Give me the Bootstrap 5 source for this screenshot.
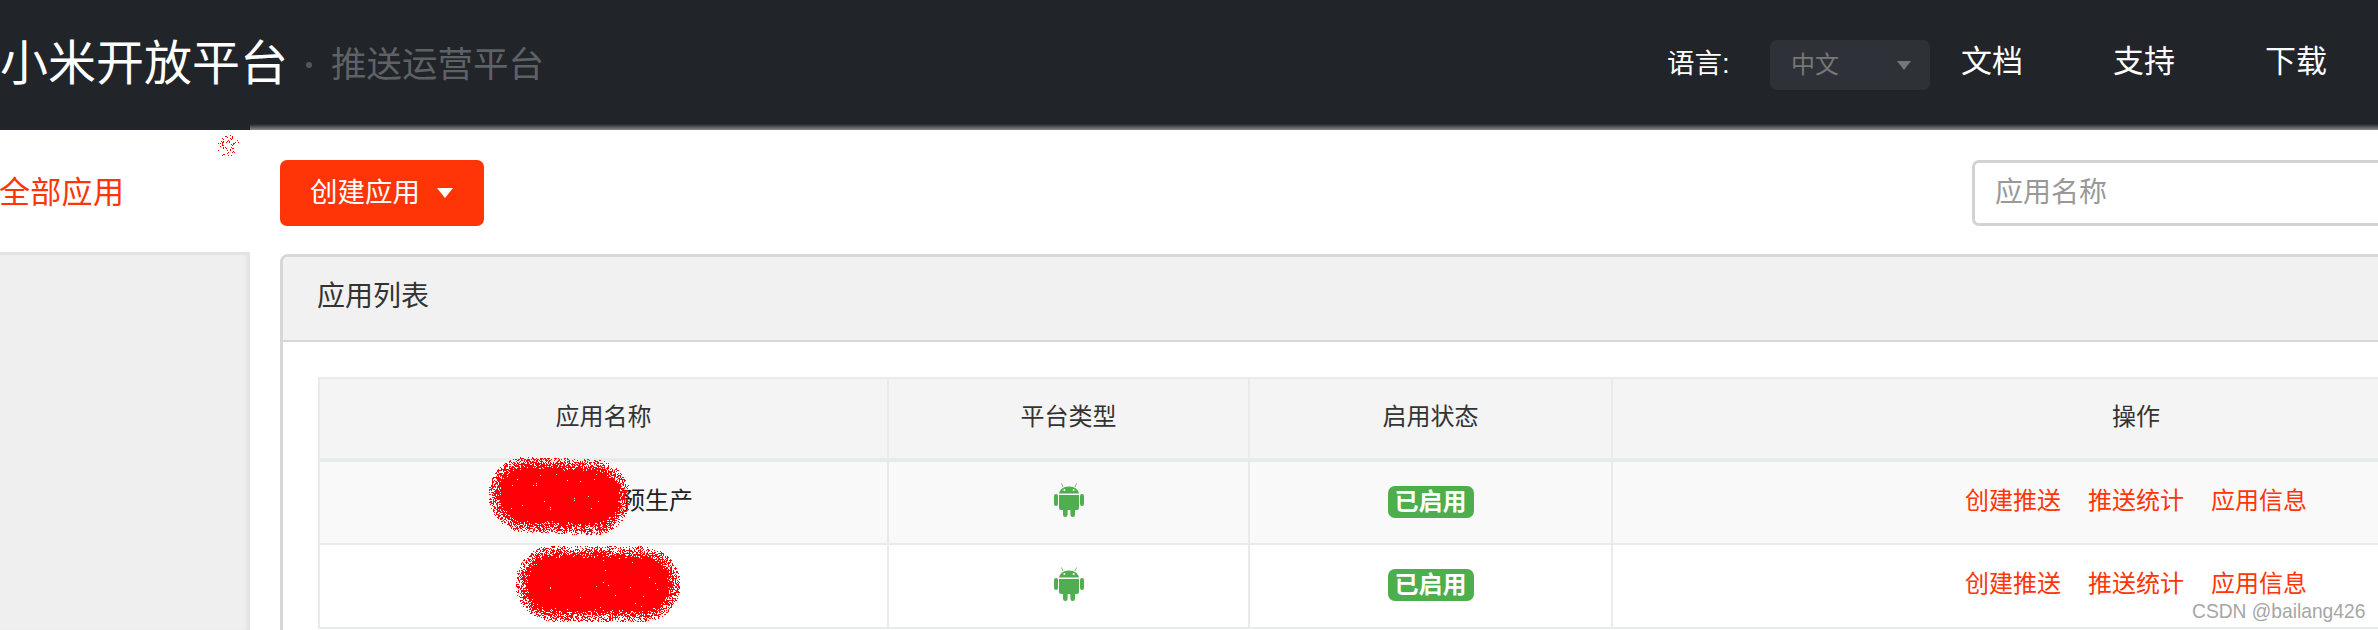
<!DOCTYPE html>
<html lang="zh">
<head>
<meta charset="utf-8">
<title>小米开放平台</title>
<link href="https://cdn.jsdelivr.net/npm/bootstrap@5.3.0/dist/css/bootstrap.min.css" rel="stylesheet">
<style>
html,body{height:630px;overflow:hidden}
body{font-family:"Liberation Sans","Noto Sans CJK SC",sans-serif;background:#fff;color:#222;width:2378px;position:relative}
.top-strip{height:130px;background:#212429;position:relative;color:#fff}
.top-strip::after{content:"";position:absolute;left:250px;right:0;bottom:0;height:6px;background:linear-gradient(to bottom,rgba(170,172,174,0),rgba(170,172,174,.75))}
.brand-main{font-size:48px;line-height:1;margin-top:-2px}
.brand-dot{width:6px;height:6px;border-radius:50%;background:#55585b;margin:0 19px 0 18px}
.brand-sub{font-size:35.5px;line-height:1;color:#5f6265;margin-top:2px}
.lang-label{font-size:27.5px;width:103px;margin-top:-2px}
.lang-pick{width:160px;height:50px;background:#2e3238;border-radius:7px;padding:0 19px 0 21px;color:#777;font-size:24px}
.lang-caret{width:0;height:0;border-left:7.5px solid transparent;border-right:7.5px solid transparent;border-top:9px solid #777}
.top-link{font-size:31px;color:#fff;text-decoration:none;width:62px;margin-left:31px;line-height:1;margin-top:-8px;white-space:nowrap}
.top-link:hover{color:#fff}
.top-link+.top-link{margin-left:90px}
.top-nav-wrap{margin-right:51px}
.page-body{height:500px;overflow:hidden}
.side-col{width:250px;flex:none}
.side-head{height:122px;color:#ff3508;font-size:31px;padding-top:44px;margin-left:-1px;line-height:1.2;letter-spacing:.3px}
.side-rest{flex:1;background:#efefef;border-top:3px solid #e3e3e3;box-shadow:inset -6px 0 5px -3px #dfdfdf}
.main-col{margin-left:30px;flex:none;width:2440px;padding-top:30px}
.make-btn,.make-btn:hover{width:204px;height:66px;background:#ff3508;border:0;border-radius:7px;color:#fff;font-size:27.5px;line-height:1;padding:0 0 0 30px}
.make-caret{width:0;height:0;border-left:8px solid transparent;border-right:8px solid transparent;border-top:10px solid #fff;margin-left:17px}
.search-field.form-control{width:748px;height:66px;border:3px solid #d2d2d2;border-radius:7px;font-size:28px;padding:0 20px;box-shadow:none}
.search-field::placeholder{color:#999}
.toolbar-row{height:94px}
.list-panel.card{height:420px;border:3px solid #d7d7d7;border-radius:8px 8px 0 0;overflow:hidden}
.list-panel .card-header{height:85px;background:#f1f1f1;border-bottom:2px solid #d7d7d7;font-size:28px;padding:0 34px;border-radius:0;line-height:80px;color:#333}
.list-panel .card-body{padding:35px 35px 0 35px}
.app-grid.table{table-layout:fixed;width:2343px;border-collapse:collapse;margin:0;--bs-table-bg:transparent;font-size:24px;color:#222}
.app-grid th,.app-grid td{border:2.5px solid #e7ebea;text-align:center;vertical-align:middle;padding:0;font-weight:400}
.app-grid thead tr{height:82px;background:#f4f4f4}
.app-grid thead th{border-bottom-width:4px;color:#333;padding-bottom:4px}
.app-grid tbody tr{height:84px}
.app-grid .odd-row td{background:#f9f9f9}
.app-grid td.text-cell{padding-bottom:4px}
.app-grid col.col-name{width:569px}
.app-grid col.col-plat{width:361px}
.app-grid col.col-state{width:363px}
.name-gap{display:inline-block;width:107px}
.droid{width:30px;height:34px;display:block;margin:-5px auto 0}
.on-tag{display:block;width:86px;height:32px;line-height:31px;border-radius:7px;background:#4cae4c;color:#fff;font-weight:700;font-size:24px;margin:-2px auto 0}
.act-group{gap:27px}
.act-link,.act-link:hover{color:#ff3508;text-decoration:none}
.mark-scrawl{position:absolute;left:0;top:0;pointer-events:none}
.water{position:absolute;left:2192px;top:599px;font-size:21px;line-height:1.1;color:#a6a6a6;text-shadow:0 0 1px #fff;white-space:nowrap;transform:scaleX(.915);transform-origin:left center}
</style>
</head>
<body>
<header class="top-strip d-flex align-items-center">
  <div class="brand-main">小米开放平台</div>
  <div class="brand-dot"></div>
  <div class="brand-sub">推送运营平台</div>
  <div class="ms-auto d-flex align-items-center top-nav-wrap">
    <div class="lang-label">语言:</div>
    <div class="lang-pick d-flex align-items-center justify-content-between"><span>中文</span><span class="lang-caret"></span></div>
    <a class="top-link" href="#">文档</a>
    <a class="top-link" href="#">支持</a>
    <a class="top-link" href="#">下载</a>
  </div>
</header>
<div class="page-body d-flex">
  <aside class="side-col d-flex flex-column">
    <div class="side-head">全部应用</div>
    <div class="side-rest"></div>
  </aside>
  <main class="main-col">
    <div class="toolbar-row d-flex justify-content-between">
      <button class="btn make-btn d-flex align-items-center" type="button">创建应用<span class="make-caret"></span></button>
      <input class="form-control search-field" placeholder="应用名称">
    </div>
    <section class="card list-panel">
      <div class="card-header">应用列表</div>
      <div class="card-body">
        <table class="table app-grid">
          <colgroup><col class="col-name"><col class="col-plat"><col class="col-state"><col></colgroup>
          <thead><tr><th>应用名称</th><th>平台类型</th><th>启用状态</th><th>操作</th></tr></thead>
          <tbody>
            <tr class="odd-row">
              <td class="text-cell"><span class="name-gap"></span>预生产</td>
              <td><svg class="droid" viewBox="0 0 30 34"><use href="#droid-shape"/></svg></td>
              <td><span class="on-tag">已启用</span></td>
              <td class="text-cell"><div class="d-flex justify-content-center act-group"><a class="act-link" href="#">创建推送</a><a class="act-link" href="#">推送统计</a><a class="act-link" href="#">应用信息</a></div></td>
            </tr>
            <tr>
              <td class="text-cell"></td>
              <td><svg class="droid" viewBox="0 0 30 34"><use href="#droid-shape"/></svg></td>
              <td><span class="on-tag">已启用</span></td>
              <td class="text-cell"><div class="d-flex justify-content-center act-group"><a class="act-link" href="#">创建推送</a><a class="act-link" href="#">推送统计</a><a class="act-link" href="#">应用信息</a></div></td>
            </tr>
          </tbody>
        </table>
      </div>
    </section>
  </main>
</div>
<svg width="0" height="0" class="position-absolute">
  <symbol id="droid-shape" viewBox="0 0 30 34">
    <g fill="#4fae4e">
      <path d="M5 10.600C5.300 6.600 9.500 3.400 15 3.400s9.700 3.200 10 7.200z"/>
      <path d="M5 12h20v13a2 2 0 0 1-2 2H7a2 2 0 0 1-2-2z"/>
      <rect x="0" y="11" width="4" height="12" rx="2"/>
      <rect x="26" y="11" width="4" height="12" rx="2"/>
      <rect x="9" y="25" width="4.600" height="9" rx="2.300"/>
      <rect x="16.400" y="25" width="4.600" height="9" rx="2.300"/>
      <path d="M9 4 7.500.5M21 4 22.500.5" stroke="#4fae4e" stroke-width=".8" fill="none"/>
    </g>
    <circle cx="10.400" cy="7" r="1" fill="#fff"/><circle cx="19.600" cy="7" r="1" fill="#fff"/>
  </symbol>
</svg>
<svg class="mark-scrawl" width="2378" height="630"><path id="scrawl" fill="#ff0006" shape-rendering="crispEdges"/></svg>
<div class="water">CSDN @bailang426</div>
<script>
(function(){
  var seed=12345;function r(){seed=(seed*1664525+1013904223)>>>0;return seed/4294967296;}
  var d=[];
  function dist(x,y,a,b,c,e){var dx=c-a,dy=e-b,t=((x-a)*dx+(y-b)*dy)/(dx*dx+dy*dy);t=Math.max(0,Math.min(1,t));return Math.hypot(x-a-t*dx,y-b-t*dy);}
  function blob(a,b,c,e,R,f,x0,y0,x1,y1){
    for(var y=y0;y<y1;y++)for(var x=x0;x<x1;x++){
      var q=(R-dist(x,y,a,b,c,e))/f;
      var p=q<=0?0:q>=1?.997:.25+q*.75;
      if(r()<p)d.push('M'+x+' '+y+'h1v1h-1z');
    }
  }
  blob(526,494,592,497,38,13,484,452,632,537);
  blob(553,583,642,584,38,13,512,542,684,624);
  for(var i=0;i<60;i++){var t=r()*6.28,m=3+r()*9;d.push('M'+Math.round(228+Math.cos(t)*m)+' '+Math.round(145+Math.sin(t)*m)+'h1v1h-1z');}
  document.getElementById('scrawl').setAttribute('d',d.join(''));
})();
</script>
<script src="https://cdn.jsdelivr.net/npm/bootstrap@5.3.0/dist/js/bootstrap.bundle.min.js"></script>
</body>
</html>
